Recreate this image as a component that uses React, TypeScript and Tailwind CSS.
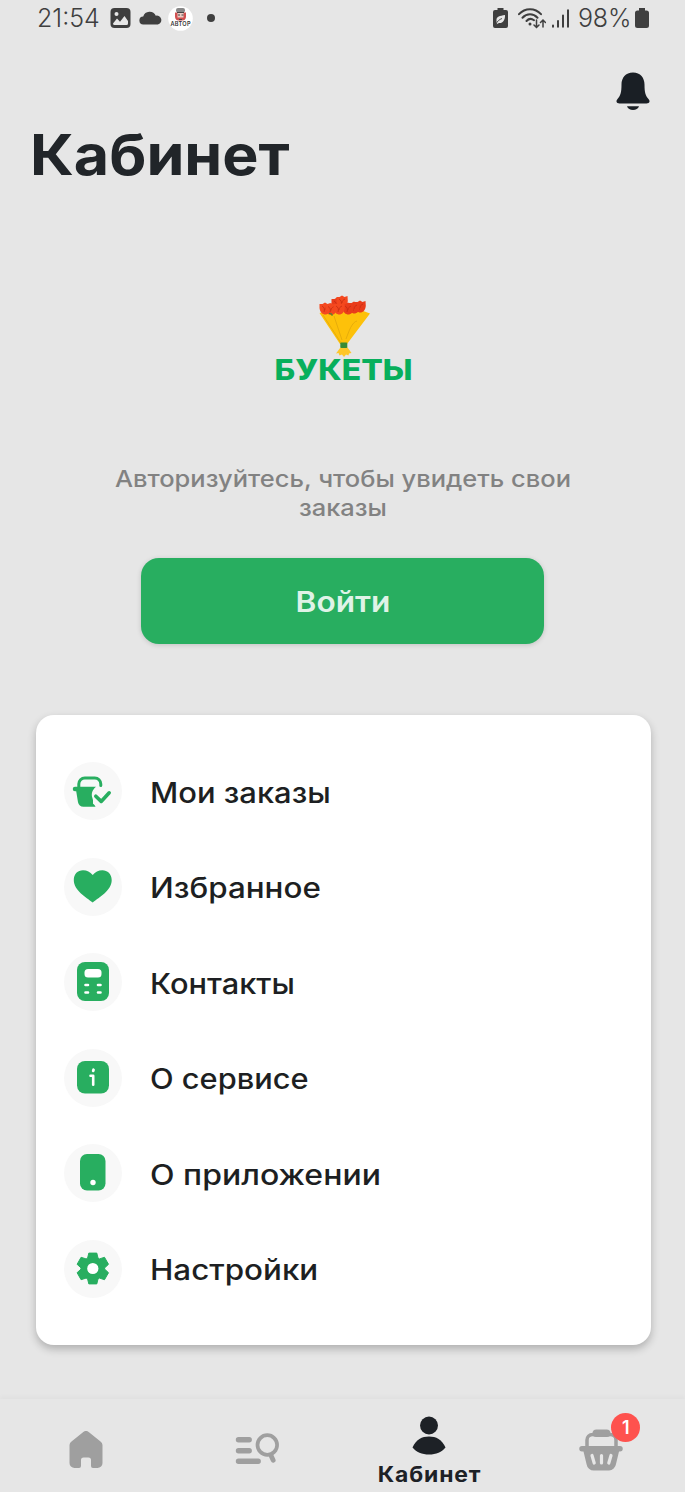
import type { ReactNode } from 'react'

const GREEN = '#28ae60'

function StatusBar() {
  return (
    <div className="h-9 flex items-center justify-between pl-[37px] pr-[35px] text-[#3f3f3f]">
      <div className="flex items-center">
        <span className="w-[63px] text-[25px] font-light leading-9 tracking-[0px] whitespace-nowrap">21:54</span>
        <svg className="ml-[10px]" width="21" height="20" viewBox="0 0 21 20">
          <rect x="0.5" y="0" width="20" height="20" rx="4" fill="#3f3f3f" />
          <path d="M3 15.5 7 10.5l3 3.2L14.5 8l3.5 5v2.5a1.5 1.5 0 0 1-1.5 1.5h-12A1.5 1.5 0 0 1 3 15.5Z" fill="#e7e7e7" />
          <circle cx="6.5" cy="6" r="2" fill="#e7e7e7" />
        </svg>
        <svg className="ml-2" width="23" height="14" viewBox="0 0 23 14">
          <path d="M4.6 13.5a4 4 0 0 1-.4-8 6.8 6.8 0 0 1 12.6-.8 4.5 4.5 0 0 1 2 8.8Z" fill="#3f3f3f" />
        </svg>
        <svg className="ml-[6px]" width="25" height="25" viewBox="0 0 25 25">
          <circle cx="12.5" cy="12.5" r="12.3" fill="#fff" />
          <rect x="8" y="2" width="9" height="4.5" rx="2" fill="#888" />
          <path d="M7 6.500h11v4.5a4 4 0 0 1-4 3.500h-3a4 4 0 0 1-4-3.500Z" fill="#d05050" />
          <rect x="9.5" y="7" width="6" height="4.5" fill="#eccdc5" />
          <path d="M9 6.500h7M10 9h2m1.500 0h2M11 13.500h3" stroke="#444" strokeWidth="1" />
          <text x="12.5" y="20" fontSize="5.6" fontWeight="600" textAnchor="middle" textLength="20" fill="#333">АВТОР</text>
        </svg>
        <span className="ml-[14px] h-2 w-2 rounded-full bg-[#3f3f3f]" />
      </div>

      <div className="flex items-center">
        <svg width="15" height="20" viewBox="0 0 15 20">
          <path d="M4.5 0h6v2H13a2 2 0 0 1 2 2v14a2 2 0 0 1-2 2H2a2 2 0 0 1-2-2V4a2 2 0 0 1 2-2h2.5Z" fill="#3f3f3f" />
          <path d="M3.5 12.5C3 8.500 7 7.800 12 7c.3 5-2.200 8.500-6 8l-2.500 1.200" fill="#e7e7e7" />
          <path d="M3 16.500c1-3.500 3.500-5 6-6" stroke="#3f3f3f" strokeWidth=".9" fill="none" />
        </svg>
        <svg className="ml-[10px]" width="28" height="21" viewBox="0 0 28 21" fill="none" stroke="#3f3f3f" strokeWidth="2" strokeLinecap="round">
          <path d="M1 6.200C7-.5 17-.5 23 6.200M4.500 9.800c4.300-4.600 10.700-4.600 15 0M8.500 13c2-2.200 5-2.600 7.500-.8" />
          <circle cx="12" cy="16" r="1.500" fill="#3f3f3f" stroke="none" />
          <path d="M18.500 12v7M16 17l2.500 2.500L21 17M25 19v-6.500M22.500 14.500 25 12l2.500 2.500" strokeWidth="1.500" />
        </svg>
        <svg className="ml-[6px]" width="17" height="19" viewBox="0 0 17 19" stroke="#3f3f3f" strokeWidth="2" strokeLinecap="round">
          <path d="M1 16.500v1.200M6 12v5.800M11 6.500v11.300M16 1.200v16.600" />
        </svg>
        <span className="ml-[9px] w-[55px] text-[25px] font-light leading-9 tracking-[-0.2px] whitespace-nowrap">98%</span>
        <svg className="ml-[2px] mr-px" width="14" height="20" viewBox="0 0 14 20">
          <path d="M4 0h6v2.500h1.500A2.500 2.500 0 0 1 14 5v12.500a2.500 2.500 0 0 1-2.500 2.500h-9A2.500 2.500 0 0 1 0 17.500V5a2.500 2.500 0 0 1 2.500-2.500H4Z" fill="#3f3f3f" />
        </svg>
      </div>
    </div>
  )
}

function Bouquet() {
  const roses = [[337, 302], [342, 300], [360, 305], [325, 307], [354, 306], [331, 307.5], [348, 307], [339, 307]]
  return (
    <svg className="overflow-visible" width="150" height="90" viewBox="268 294 150 90">
      <path d="M319.500 313c4-1 9-3 15-4h17c7 0 12 2 18.500 4.500L347 344h-7Z" fill="#fdc10a" />
      <path d="M334 316l8 24M357 321c-5 1-8 10-11 18M323 315l18 28" stroke="#dda40b" strokeWidth=".7" fill="none" />
      {roses.map(([x, y], i) => (
        <g key={i}>
          <path d={`M${x - 5.5} ${y - 3}l3 0 2.500-1.500 2.500 1.500 3-1 .3 5c-.5 4.500-3 6.500-5.500 6.500s-5.300-2-5.800-6.500Z`} fill={i % 2 ? '#f4481f' : '#e93c1b'} />
          <path d={`M${x - 3} ${y - 1}c2 1 3 3 2 6M${x + 3} ${y - 1}c-2 1-3 2-3 4`} stroke="#c02a10" strokeWidth=".7" fill="none" />
        </g>
      ))}
      <path d="M329 313.500l3 .5 0 2" stroke="#3c8d37" fill="none" />
      <path d="M341.500 346l-5.500 7.500 2.500-.5 1 2.500 2.500-1 2 2.500 2-2.500 2.500 1 .5-2 2.500-.5-5-7Z" fill="#fdc62a" />
      <rect x="340.300" y="342.500" width="7" height="5.500" rx="1" fill="#398b35" />
      <text x="274.500" y="379.500" fontSize="28" fontWeight="800" textLength="138" lengthAdjust="spacingAndGlyphs" fill="#08af5c">БУКЕТЫ</text>
    </svg>
  )
}

const ITEMS: { label: string; stretch: string; icon: ReactNode }[] = [
  {
    label: 'Мои заказы',
    stretch: 'scale-x-[1.105]',
    icon: (
      <>
        <path d="M14.800 27v-5a6 6 0 0 1 6-6h10a6 6 0 0 1 6 6v1.500" fill="none" stroke={GREEN} strokeWidth="3" strokeLinecap="round" />
        <path d="M11 24.800h21c-4 3.500-5 7.500-3.500 11.500.8 2 .5 4 .5 5.500 1 .8 2 1.500 2.500 3H19.500c-3 0-5-1.800-5.500-4.500L12.200 29.300H11a2.250 2.250 0 0 1 0-4.500Z" fill={GREEN} />
        <path d="m31.800 34.200 5.400 5.200 8-8.600" fill="none" stroke={GREEN} strokeWidth="3.600" strokeLinecap="round" strokeLinejoin="round" />
      </>
    ),
  },
  {
    label: 'Избранное',
    stretch: 'scale-x-[1.12]',
    icon: <path d="M28.700 44.500C22 39 9.800 32.500 9.800 22c0-6 4-9.700 9.200-9.700 4 0 7.200 1.700 9.700 4.700 2.500-3 5.700-4.700 9.700-4.700 5 0 9.300 3.700 9.300 9.700 0 10.500-12.300 17-19 22.500Z" fill={GREEN} />,
  },
  {
    label: 'Контакты',
    stretch: 'scale-x-[1.1]',
    icon: (
      <>
        <rect x="13" y="9" width="32" height="39" rx="8" fill={GREEN} />
        <rect x="20.500" y="16" width="17" height="8.500" rx="3.500" fill="#fff" />
        <path d="M21.500 32h2.500m10 0h2.500M21.500 39.500h2.500m10 0h2.500" stroke="#fff" strokeWidth="2.600" strokeLinecap="round" />
      </>
    ),
  },
  {
    label: 'О сервисе',
    stretch: 'scale-x-[1.1]',
    icon: (
      <>
        <rect x="13" y="12" width="32" height="32.500" rx="8" fill={GREEN} />
        <path d="M26.500 26.700h2.700v9" stroke="#fff" strokeWidth="2.600" fill="none" strokeLinecap="round" strokeLinejoin="round" />
        <path d="M29.200 21.800l.3-1" stroke="#fff" strokeWidth="2.800" strokeLinecap="round" />
      </>
    ),
  },
  {
    label: 'О приложении',
    stretch: 'scale-x-[1.143]',
    icon: (
      <>
        <rect x="16" y="10" width="25.500" height="36.500" rx="7" fill={GREEN} />
        <circle cx="29" cy="38.500" r="2.700" fill="#fff" />
      </>
    ),
  },
  {
    label: 'Настройки',
    stretch: 'scale-x-[1.12]',
    icon: (
      <g transform="translate(28.800 28.500)">
        <path d="M-4-15.400h8l1.200 5 1.500.8 5-1.600 4 7-3.900 3.600v1.200l3.900 3.600-4 7-5-1.600-1.500.8L4 15.400h-8l-1.200-5-1.500-.8-5 1.600-4-7L-11.800.600v-1.200l-3.900-3.600 4-7 5 1.600 1.500-.8Z" fill={GREEN} stroke={GREEN} strokeWidth="1" strokeLinejoin="round" />
        <circle r="5.600" fill="#fff" />
      </g>
    ),
  },
]

function BottomNav() {
  return (
    <nav className="h-[93px] grid grid-cols-4 shadow-[0_-3px_4px_rgba(0,0,0,0.025)]">
      <div className="flex justify-center pt-8">
        <svg width="34" height="38" viewBox="0 0 34 38">
          <path d="M14 1.200a4.500 4.500 0 0 1 6 0L31.500 10.500A4.500 4.500 0 0 1 33.500 14v18a5 5 0 0 1-5 5H24a2 2 0 0 1-2-2v-6a2.500 2.500 0 0 0-2.500-2.500h-5A2.500 2.500 0 0 0 12 29v6a2 2 0 0 1-2 2H5.500a5 5 0 0 1-5-5V14a4.500 4.500 0 0 1 2-3.500Z" fill="#9f9f9f" />
        </svg>
      </div>
      <div className="flex justify-center pt-8">
        <svg width="44" height="36" viewBox="0 0 44 36" fill="none" stroke="#9f9f9f" strokeLinecap="round">
          <path d="M3.500 8.700h10.700M3.500 19.700h10.700M3.500 30.300h19.700" strokeWidth="5.400" />
          <circle cx="32.300" cy="14" r="9.800" strokeWidth="3.700" />
          <path d="m36 24.500 2.200 4.800" strokeWidth="4.800" />
        </svg>
      </div>
      <div className="flex flex-col items-center pl-[2px] pt-[17px]">
        <svg width="34" height="39" viewBox="0 0 34 39" fill="#1d2126">
          <circle cx="17" cy="9.500" r="9" />
          <path d="M.5 31.500C4 23.500 10 20.500 17 20.500s13 3 16.500 11C30 36 24 38.500 17 38.500S4 36 .5 31.500Z" />
        </svg>
        <span className="mt-[8px] ml-px scale-x-[1.09] text-[21px] font-bold leading-6 tracking-[0.800px] text-[#1d2126]">Кабинет</span>
      </div>
      <div className="flex justify-center pl-1 pt-[30px]">
        <div className="relative h-[42px] w-11">
          <svg width="44" height="42" viewBox="0 0 44 42">
            <path d="M8 19V11c0-3 2-5.500 6-5.500h17c4 0 6 2.500 6 5.500v8" fill="none" stroke="#9f9f9f" strokeWidth="3.500" />
            <path d="M13.500 4.500a4 4 0 0 1 4-4h10a4 4 0 0 1 4 4 3.500 3.500 0 0 1-3.500 3.500H17a3.500 3.500 0 0 1-3.500-3.500Z" fill="#9f9f9f" />
            <path d="M3 17h38a2.500 2.500 0 0 1 0 5.500h-1l-3 12.500a7.500 7.500 0 0 1-7 6.500H15a7.500 7.500 0 0 1-7.500-6.500L4.500 22.500H3a2.500 2.500 0 0 1 0-5.500Z" fill="#9f9f9f" />
            <path d="m13 26.500 2.200 7.500M22.500 26.500v7.500M32 26.500 29.800 34" stroke="#e7e7e7" strokeWidth="3.200" strokeLinecap="round" />
          </svg>
          <span className="absolute -top-[16px] left-[32px] flex h-[29px] w-[29px] items-center justify-center rounded-full bg-[#fe524e] text-[18px] font-semibold text-white">1</span>
        </div>
      </div>
    </nav>
  )
}

export default function App() {
  return (
    <div className="flex h-[1492px] w-[685px] flex-col overflow-hidden bg-[#e6e6e6] font-[Inter,sans-serif]">
      <StatusBar />
      <div className="flex justify-end pr-[35px] pt-[36px]">
        <svg width="34" height="39" viewBox="0 0 34 39" fill="#1a1f25">
          <path d="M17 .5C9.500.5 5.500 6 5.500 12.500c0 8-1 11-4 14.500-2.500 3 0 4.500 2 4.500h27c2 0 4.500-1.500 2-4.500-3-3.500-4-6.500-4-14.500C28.500 6 24.500.5 17 .5Z" />
          <path d="M11 34.300h12c-1 2.500-3 3.700-6 3.700s-5-1.200-6-3.700Z" />
        </svg>
      </div>
      <h1 className="mt-3 pl-[30px] text-[56px] font-bold leading-[64px] text-[#212529]">
        <span className="inline-block origin-left scale-x-[1.088]">Кабинет</span>
      </h1>

      <section className="mt-[107px] flex flex-col items-center">
        <Bouquet />
        <p className="mt-[81px] scale-x-[1.107] text-center text-[23px] font-medium leading-[28.500px] text-[#828282]">
          Авторизуйтесь, чтобы увидеть свои<br />заказы
        </p>
        <button className="mt-[35.5px] h-[86px] w-[403px] rounded-[18px] bg-[#28ae60] pt-[2px] text-[28px] font-semibold text-[#dff3e7] shadow-[0_1px_5px_rgba(0,0,0,0.16)]">
          <span className="inline-block scale-x-[1.13]">Войти</span>
        </button>
      </section>

      <section className="ml-9 mt-[71px] h-[630px] w-[615px] rounded-[18px] bg-white pl-7 pt-[29px] shadow-[0_4px_8px_rgba(0,0,0,0.24)]">
        {ITEMS.map(item => (
          <div key={item.label} className="flex h-[95.500px] items-center">
            <svg className="shrink-0 rounded-full bg-[#f8f8f8]" width="58" height="58" viewBox="0 0 58 58">{item.icon}</svg>
            <span className={`ml-[28px] mt-[3px] origin-left text-[28px] font-medium leading-9 text-[#1d1f22] ${item.stretch}`}>{item.label}</span>
          </div>
        ))}
      </section>
      <div className="flex-1" />
      <BottomNav />
    </div>
  )
}
